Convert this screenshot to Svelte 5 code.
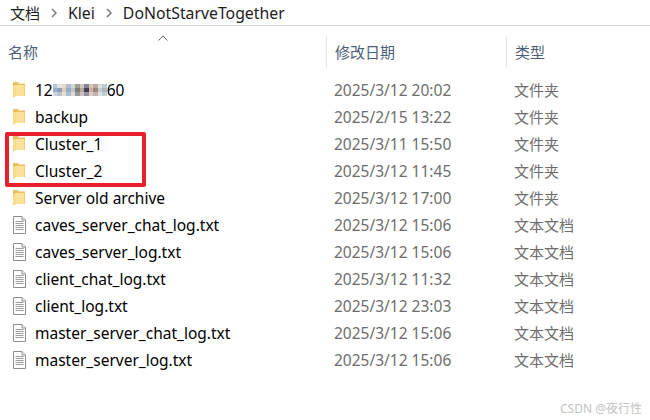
<script>
const folders = [
	{ name: 'backup', date: '2025/2/15 13:22' },
	{ name: 'Cluster_1', date: '2025/3/11 15:50' },
	{ name: 'Cluster_2', date: '2025/3/12 11:45' },
	{ name: 'Server old archive', date: '2025/3/12 17:00' },
];
const files = [
	{ name: 'caves_server_chat_log.txt', date: '2025/3/12 15:06' },
	{ name: 'caves_server_log.txt', date: '2025/3/12 15:06' },
	{ name: 'client_chat_log.txt', date: '2025/3/12 11:32' },
	{ name: 'client_log.txt', date: '2025/3/12 23:03' },
	{ name: 'master_server_chat_log.txt', date: '2025/3/12 15:06' },
	{ name: 'master_server_log.txt', date: '2025/3/12 15:06' },
];
// mosaic over the hidden part of the first folder name
const mosaic = [
	['#b9c4d2', '#dfe3e8', '#e8d8c6', '#aebdd0', '#d5d6d6', '#a0a09a', '#cfc8be', '#85829a', '#d8c4b6', '#bca8a0', '#dcdcd8', '#bccbd9'],
	['#a0b0c6', '#8aa0b8', '#e2cdb6', '#97adc6', '#c2c6ca', '#7e7e79', '#b4a99a', '#45405e', '#ccb2a0', '#9e867f', '#cccbc6', '#a4b8cc'],
	['#ccd5de', '#b4c2d2', '#e8dccd', '#abbed2', '#d8dadc', '#9a9a94', '#ccc4ba', '#9490a2', '#dccbc0', '#c4b2ac', '#dfdfdc', '#bccddc'],
];
</script>

<div class="window">
	<nav class="crumbs">
		<span class="cjk">文档</span>
		<svg class="chev" viewBox="0 0 6 10" aria-hidden="true"><path d="M1 1l4 4-4 4" /></svg>
		<span>Klei</span>
		<svg class="chev" viewBox="0 0 6 10" aria-hidden="true"><path d="M1 1l4 4-4 4" /></svg>
		<span>DoNotStarveTogether</span>
	</nav>

	<div class="head">
		<div class="col name-col">
			<svg class="sort" viewBox="0 0 10 6" aria-hidden="true"><path d="M.5 5.500L5 1l4.500 4.500" /></svg>
			名称
		</div>
		<div class="col date-col">修改日期</div>
		<div class="col type-col">类型</div>
	</div>

	<div class="rows">
		<div class="row">
			<div class="name">
				{@render folderIcon()}
				<span>12</span>
				<span class="mosaic" aria-hidden="true">
					{#each mosaic as line}
						{#each line as c}
							<i style="background:{c}"></i>
						{/each}
					{/each}
				</span>
				<span>60</span>
			</div>
			<div class="date">2025/3/12 20:02</div>
			<div class="type">文件夹</div>
		</div>
		{#each folders as f}
			<div class="row">
				<div class="name">{@render folderIcon()}<span>{f.name}</span></div>
				<div class="date">{f.date}</div>
				<div class="type">文件夹</div>
			</div>
		{/each}
		{#each files as f}
			<div class="row">
				<div class="name">{@render fileIcon()}<span>{f.name}</span></div>
				<div class="date">{f.date}</div>
				<div class="type">文本文档</div>
			</div>
		{/each}
	</div>

	<div class="highlight"></div>
	<div class="watermark">CSDN @夜行性</div>
</div>

{#snippet folderIcon()}
	<svg class="icon folder" viewBox="0 0 12 17" aria-hidden="true">
		<path d="M0 1h5l1 1.500h6V15H0z" fill="#e9c164" />
		<path d="M3 4h9v11H2.500z" fill="#fbe29a" />
		<path d="M11 4h1v11h-1z" fill="#f0cc74" />
		<path d="M0 3.500l3-1V15L0 17z" fill="#f9dc8a" />
		<path d="M0 3.500l3-1v1L0 4.500z" fill="#dcaa44" />
	</svg>
{/snippet}

{#snippet fileIcon()}
	<svg class="icon file" viewBox="0 0 13 18" aria-hidden="true">
		<path d="M.5.5h8.500l3.500 3.500v13.500H.5z" fill="#fff" stroke="#8e8e8e" />
		<path d="M9 .5V4h3.500" fill="#eee" stroke="#8e8e8e" />
		<path d="M2.500 5.500h8M2.500 7.500h8M2.500 9.500h8M2.500 11.500h8M2.500 13.500h8" stroke="#9c9c9c" />
	</svg>
{/snippet}

<style>
	:global(body) {
		background: #fff;
	}

	.window {
		position: relative;
		width: 650px;
		height: 420px;
		overflow: hidden;
		background: #fff;
		font-family: 'Noto Sans', 'Noto Sans CJK SC', sans-serif;
		font-size: 15.500px;
	}

	.crumbs {
		display: flex;
		align-items: center;
		gap: 11px;
		height: 26px;
		padding-left: 10px;
		box-sizing: border-box;
		border-bottom: 1px solid #d9d9d9;
		color: #1c1c1c;
		font-size: 15.800px;
	}

	.cjk {
		font-size: 15px;
	}

	.chev {
		width: 6px;
		height: 10px;
		fill: none;
		stroke: #777;
		stroke-width: 1.500;
	}

	.head {
		display: grid;
		grid-template-columns: 326px 180px 1fr;
		height: 32px;
		margin-top: 10px;
		color: #4c607a;
		font-size: 15px;
		line-height: 32px;
	}

	.col {
		position: relative;
		padding-left: 8px;
	}

	.date-col,
	.type-col {
		border-left: 1px solid #e5e5e5;
	}

	.sort {
		position: absolute;
		left: 158px;
		top: -1px;
		width: 10px;
		height: 6px;
		fill: none;
		stroke: #666;
	}

	.rows {
		margin-top: 8px;
	}

	.row {
		display: grid;
		grid-template-columns: 326px 180px 1fr;
		align-items: center;
		height: 27px;
		color: #6d6d6d;
	}

	.name {
		display: flex;
		align-items: center;
		padding-left: 13px;
		color: #000;
	}

	.icon {
		flex: none;
		margin-right: 10px;
	}

	.folder {
		width: 12px;
		height: 17px;
	}

	.file {
		width: 13px;
		height: 18px;
		margin-right: 9px;
	}

	.date {
		padding-left: 8px;
	}

	.type {
		padding-left: 8px;
		font-size: 15px;
	}

	.mosaic {
		display: grid;
		grid-template-columns: repeat(12, 4.500px);
		grid-auto-rows: 4px;
		width: 54px;
	}

	.mosaic i {
		display: block;
	}

	.highlight {
		position: absolute;
		left: 5px;
		top: 132px;
		width: 141px;
		height: 55px;
		box-sizing: border-box;
		border: 4px solid #e8202e;
		border-radius: 2px;
	}

	.watermark {
		position: absolute;
		right: 8px;
		top: 399px;
		color: #c4c4c4;
		font-size: 12px;
		white-space: nowrap;
	}
</style>
